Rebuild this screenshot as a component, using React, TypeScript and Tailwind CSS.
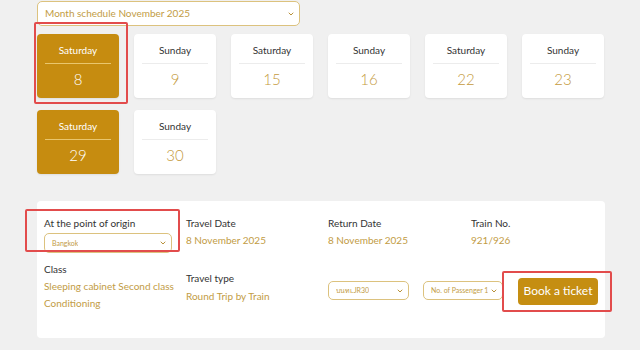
import { ChevronDown } from "lucide-react"

const DAYS = [
  { day: "Saturday", num: 8, active: true },
  { day: "Sunday", num: 9 },
  { day: "Saturday", num: 15 },
  { day: "Sunday", num: 16 },
  { day: "Saturday", num: 22 },
  { day: "Sunday", num: 23 },
  { day: "Saturday", num: 29, active: true },
  { day: "Sunday", num: 30 },
]

function FakeSelect({ text, w, h, size = "text-[7px]" }: { text: string; w: string; h: string; size?: string }) {
  return (
    <div className={`${w} ${h} flex items-center justify-between pl-[7px] pr-[4px] rounded-[5px] border border-[#dcc27e] bg-white`}>
      <span className={`${size} text-[#c29c45] whitespace-nowrap overflow-hidden`}>{text}</span>
      <ChevronDown size={8} strokeWidth={3} className="text-[#b8913a] shrink-0" />
    </div>
  )
}

function DayCard({ day, num, active }: { day: string; num: number; active?: boolean }) {
  return (
    <div className={`w-[82px] h-[64px] rounded-[4px] px-[8px] pt-[9px] flex flex-col items-center shadow-[0_1px_2px_rgba(0,0,0,0.08)] ${active ? "bg-[#c68c10]" : "bg-white"}`}>
      <p className={`text-[10px] leading-[14px] ${active ? "text-white" : "text-[#333]"}`}>{day}</p>
      <div className={`w-full h-px mt-[6px] ${active ? "bg-[#e9c66d]" : "bg-[#ececec]"}`} />
      <p className={`text-[15px] leading-[20px] mt-[5px] font-light ${active ? "text-white" : "text-[#c49a3c]"}`}>{num}</p>
    </div>
  )
}

function Field({ label, value }: { label: string; value: string }) {
  return (
    <div className="pt-[9px]">
      <p className="text-[10px] leading-[14px] text-[#333]">{label}</p>
      <p className="text-[10px] leading-[14px] mt-[3px] text-[#c29c45]">{value}</p>
    </div>
  )
}

export default function App() {
  return (
    <div className="w-[640px] h-[350px] overflow-hidden bg-[#f0f0f0] pl-[37px] pt-[1px]" style={{ fontFamily: "Lato, 'Noto Sans', sans-serif" }}>
      <FakeSelect text="Month schedule November 2025" w="w-[263px]" h="h-[25px]" size="text-[10px]" />

      {/* day cards */}
      <div className="grid grid-cols-[repeat(6,82px)] gap-x-[15px] gap-y-[12px] mt-[8px]">
        {DAYS.map((d, i) => (
          <div key={i} className="relative">
            <DayCard {...d} />
            {i === 0 && (
              <div className="absolute -left-[3px] -top-[12px] w-[94px] h-[82px] border-2 border-[#e24c4c] rounded-[2px] pointer-events-none" />
            )}
          </div>
        ))}
      </div>

      {/* booking panel */}
      <div className="mt-[27px] w-[568px] h-[137px] bg-white rounded-[4px] pl-[7px] pt-[6px]">
        <div className="grid grid-cols-[142px_142px_143px_1fr]">
          <div className="relative pt-[9px]">
            <p className="text-[10px] leading-[14px] text-[#333]">At the point of origin</p>
            <div className="mt-[3px]">
              <FakeSelect text="Bangkok" w="w-[128px]" h="h-[20px]" />
            </div>
            <div className="absolute -left-[19px] top-[2px] w-[155px] h-[43px] border-2 border-[#e24c4c] rounded-[2px] pointer-events-none" />
          </div>
          <Field label="Travel Date" value="8 November 2025" />
          <Field label="Return Date" value="8 November 2025" />
          <Field label="Train No." value="921/926" />

          <div className="pt-[9px]">
            <p className="text-[10px] leading-[14px] text-[#333]">Class</p>
            <p className="text-[10px] leading-[17px] mt-[2px] text-[#c29c45]">
              Sleeping cabinet Second class<br />Conditioning
            </p>
          </div>
          <div className="pt-[18px]">
            <p className="text-[10px] leading-[14px] text-[#333]">Travel type</p>
            <p className="text-[10px] leading-[14px] mt-[4px] text-[#c29c45]">Round Trip by Train</p>
          </div>
          <div className="col-span-2 flex items-start gap-[14px] pt-[24px]">
            <div className="mt-[4px]">
              <FakeSelect text="บนทเ.JR30" w="w-[81px]" h="h-[19px]" />
            </div>
            <div className="mt-[4px]">
              <FakeSelect text="No. of Passenger 1" w="w-[80px]" h="h-[19px]" />
            </div>
            <div className="relative ml-[1px]">
              <button className="w-[80px] h-[27px] rounded-[4px] bg-[#c58e12] text-white text-[12px]">Book a ticket</button>
              <div className="absolute -left-[16px] -top-[6px] w-[110px] h-[41px] border-2 border-[#e24c4c] rounded-[2px] pointer-events-none" />
            </div>
          </div>
        </div>
      </div>
    </div>
  )
}
